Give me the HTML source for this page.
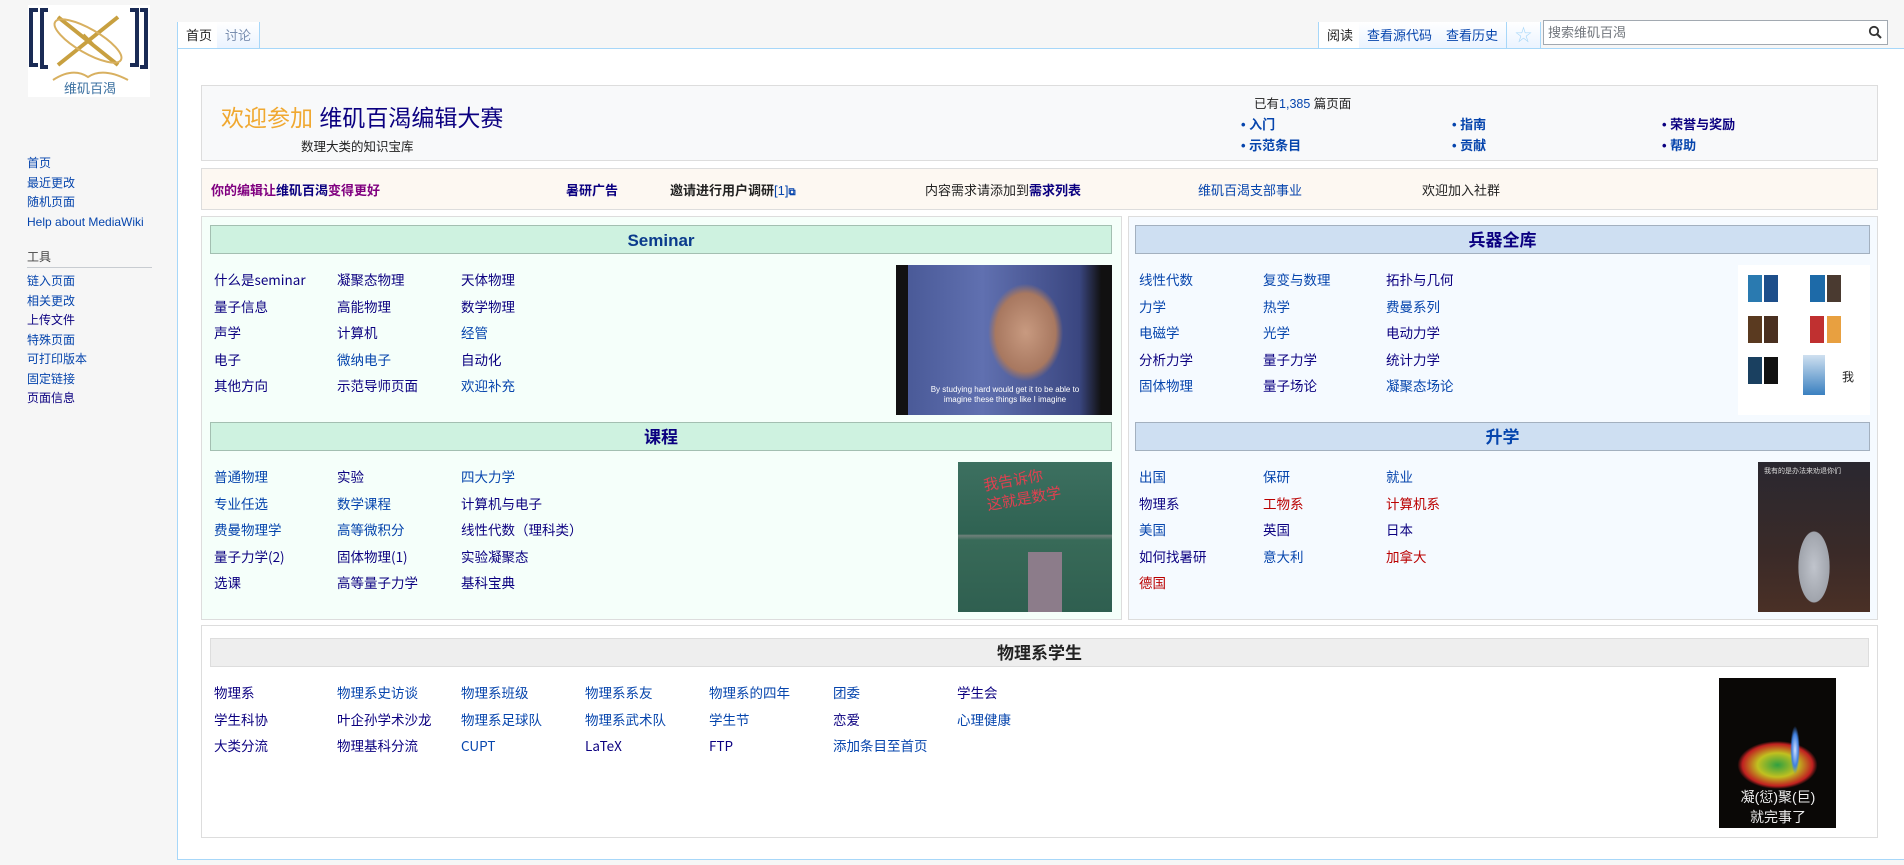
<!DOCTYPE html>
<html><head><meta charset="utf-8"><style>
*{margin:0;padding:0;box-sizing:border-box}
body{width:1904px;height:865px;overflow:hidden;background:#f6f6f6;font-family:"Liberation Sans","Noto Sans CJK SC",sans-serif;font-size:13px;color:#222;position:relative}
.a{position:absolute;white-space:nowrap}
.nv{color:#0b0080}.bl{color:#0645ad}.rd{color:#ba0000}.bk{color:#222}
#content{position:absolute;left:177px;top:48px;width:1727px;height:812px;background:#fff;border:1px solid #a7d7f9;border-right:none}
.side a{display:block;color:#0645ad;font-size:12px;line-height:19.5px;text-decoration:none}
.tab{position:absolute;top:22px;height:27px;font-size:13px;line-height:27px;padding:0 8px;background:linear-gradient(#fff,#eaf3ff);border-right:1px solid #a7d7f9}
.hdr{position:absolute;height:29px;text-align:center;font-weight:bold;font-size:17px;line-height:29px}
.row{position:absolute;font-size:13.5px}
.row span{position:absolute;white-space:nowrap;line-height:18px;height:18px;font-family:"Noto Sans CJK SC","Liberation Sans",sans-serif}
</style></head><body>
<div class="a" style="left:28px;top:5px;width:122px;height:92px;background:#fff"></div>
<svg class="a" style="left:28px;top:5px" width="122" height="92" viewBox="0 0 122 92">
<path d="M10 5H3V60H10" stroke="#1a2b55" stroke-width="4" fill="none"/>
<path d="M20 5H14V62H20" stroke="#1a2b55" stroke-width="4" fill="none"/>
<path d="M102 5H109V60H102M112 5H118V62H112" stroke="#1a2b55" stroke-width="4" fill="none"/>
<path d="M30 12L90 60M90 12L30 60M55 30l10 10" stroke="#c8a040" stroke-width="4" fill="none"/>
<ellipse cx="60" cy="36" rx="38" ry="12" transform="rotate(30 60 36)" stroke="#d8b060" stroke-width="2" fill="none"/>
<path d="M25 75Q45 62 60 72Q75 62 100 75" stroke="#d8b060" stroke-width="2" fill="none"/>
<text x="62" y="88" text-anchor="middle" font-size="13" fill="#3a6fa0" font-family="Noto Sans CJK SC">维矶百渴</text>
</svg>
<div class="side a" style="left:27px;top:154px">
<a>首页</a><a>最近更改</a><a>随机页面</a><a>Help about MediaWiki</a>
</div>
<div class="a" style="left:27px;top:248px;font-size:12px;color:#444">工具</div>
<div class="a" style="left:27px;top:267px;width:125px;height:1px;background:#c8ccd1"></div>
<div class="side a" style="left:27px;top:272px">
<a>链入页面</a><a>相关更改</a><a style="color:#0b0080">上传文件</a><a>特殊页面</a><a>可打印版本</a><a>固定链接</a><a style="color:#0b0080">页面信息</a>
</div>
<div class="tab" style="left:177px;background:#fff;color:#222;border-left:1px solid #a7d7f9">首页</div>
<div class="tab" style="left:217px;color:#7a8fb0">讨论</div>
<div class="a" style="left:260px;top:48px;width:1058px;height:1px;background:#a7d7f9"></div>
<div class="tab" style="left:1318px;background:#fff;color:#222;border-left:1px solid #a7d7f9">阅读</div>
<div class="tab" style="left:1359px;color:#0645ad">查看源代码</div>
<div class="tab" style="left:1438px;color:#0645ad">查看历史</div>
<div class="tab" style="left:1507px;color:#a7d7f9;font-size:17px">☆</div>
<div class="a" style="left:1543px;top:20px;width:345px;height:25px;border:1px solid #a2a9b1;background:#fff;font-size:13px;line-height:23px;padding-left:4px;color:#72777d">搜索维矶百渴</div>
<svg class="a" style="left:1868px;top:25px" width="14" height="14"><circle cx="6" cy="6" r="4.2" stroke="#333" stroke-width="1.8" fill="none"/><path d="M9 9L13 13" stroke="#333" stroke-width="2"/></svg>
<div id="content"></div>
<div class="a" style="left:201px;top:85px;width:1677px;height:76px;background:#f8f9fa;border:1px solid #ddd"></div>
<div class="a" style="left:221px;top:99px;font-size:23px"><span style="color:#f0a830">欢迎参加</span> <span style="color:#0b0080">维矶百渴编辑大赛</span></div>
<div class="a" style="left:301px;top:136px;font-size:12.5px">数理大类的知识宝库</div>
<div class="a" style="left:1254px;top:93px;font-size:12.5px">已有<span class="bl">1,385</span> 篇页面</div>
<div class="a" style="left:1241px;top:114px;font-size:13px;font-weight:bold;color:#0645ad;line-height:21px">• 入门<br>• 示范条目</div>
<div class="a" style="left:1452px;top:114px;font-size:13px;font-weight:bold;color:#0645ad;line-height:21px">• 指南<br>• 贡献</div>
<div class="a" style="left:1662px;top:114px;font-size:13px;font-weight:bold;color:#0b0080;line-height:21px">• 荣誉与奖励<br>• <span class="bl">帮助</span></div>
<div class="a" style="left:201px;top:168px;width:1677px;height:42px;background:#fdf8f2;border:1px solid #ddd"></div>
<div class="a" style="left:211px;top:180px;font-weight:bold;font-size:13px;color:#800080">你的编辑让<span class="nv">维矶百渴</span>变得更好</div>
<div class="a" style="left:566px;top:180px;font-weight:bold;color:#0b0080">暑研广告</div>
<div class="a" style="left:670px;top:180px;font-weight:bold;color:#222">邀请进行用户调研<span class="bl" style="font-weight:normal">[1]</span><span class="bl" style="font-size:10px">⧉</span></div>
<div class="a" style="left:925px;top:180px">内容需求请添加到<b class="nv">需求列表</b></div>
<div class="a bl" style="left:1198px;top:180px">维矶百渴支部事业</div>
<div class="a" style="left:1422px;top:180px">欢迎加入社群</div>
<div class="a" style="left:201px;top:216px;width:921px;height:404px;background:#f5fffa;border:1px solid #ddd"></div>
<div class="hdr" style="left:210px;top:225px;width:902px;background:#cef2e0;border:1px solid #a3bfb1;color:#0b3b8c">Seminar</div>
<div class="row" style="left:214px;top:270px">
<span class="nv" style="left:0;top:0">什么是seminar</span><span class="nv" style="left:123px;top:0">凝聚态物理</span><span class="nv" style="left:247px;top:0">天体物理</span>
<span class="nv" style="left:0;top:26.5px">量子信息</span><span class="nv" style="left:123px;top:26.5px">高能物理</span><span class="nv" style="left:247px;top:26.5px">数学物理</span>
<span class="nv" style="left:0;top:53px">声学</span><span class="nv" style="left:123px;top:53px">计算机</span><span class="bl" style="left:247px;top:53px">经管</span>
<span class="nv" style="left:0;top:79.5px">电子</span><span class="bl" style="left:123px;top:79.5px">微纳电子</span><span class="nv" style="left:247px;top:79.5px">自动化</span>
<span class="nv" style="left:0;top:106px">其他方向</span><span class="nv" style="left:123px;top:106px">示范导师页面</span><span class="bl" style="left:247px;top:106px">欢迎补充</span>
</div>
<div class="a" style="left:896px;top:265px;width:216px;height:150px;background:radial-gradient(ellipse 50px 65px at 60% 45%,#c89a80 0%,#a87860 60%,transparent 75%),linear-gradient(90deg,#111 0,#111 12px,#4a5a98 12px,#6070b0 40%,#3a4680 85%,#111 95%)"></div>
<div class="a" style="left:930px;top:385px;width:150px;font-size:8px;color:#fff;text-align:center;line-height:10px;white-space:normal">By studying hard would get it to be able to imagine these things like I imagine</div>
<div class="hdr" style="left:210px;top:422px;width:902px;background:#cef2e0;border:1px solid #a3bfb1;color:#0b0080">课程</div>
<div class="row" style="left:214px;top:467px">
<span class="bl" style="left:0;top:0">普通物理</span><span class="nv" style="left:123px;top:0">实验</span><span class="bl" style="left:247px;top:0">四大力学</span>
<span class="bl" style="left:0;top:26.5px">专业任选</span><span class="bl" style="left:123px;top:26.5px">数学课程</span><span class="nv" style="left:247px;top:26.5px">计算机与电子</span>
<span class="bl" style="left:0;top:53px">费曼物理学</span><span class="bl" style="left:123px;top:53px">高等微积分</span><span class="nv" style="left:247px;top:53px">线性代数（理科类）</span>
<span class="nv" style="left:0;top:79.5px">量子力学(2)</span><span class="nv" style="left:123px;top:79.5px">固体物理(1)</span><span class="nv" style="left:247px;top:79.5px">实验凝聚态</span>
<span class="nv" style="left:0;top:106px">选课</span><span class="nv" style="left:123px;top:106px">高等量子力学</span><span class="nv" style="left:247px;top:106px">基科宝典</span>
</div>
<div class="a" style="left:958px;top:462px;width:154px;height:150px;background:linear-gradient(180deg,#3d7060 0,#2f6252 48%,#70807a 49%,#386a58 52%,#2f5f50 100%)"></div>
<div class="a" style="left:985px;top:470px;font-size:15px;color:#e04050;line-height:20px;transform:rotate(-10deg)">我告诉你<br>这就是数学</div>
<div class="a" style="left:1028px;top:552px;width:34px;height:60px;background:#8c7c8a"></div>
<div class="a" style="left:1128px;top:216px;width:750px;height:404px;background:#f5faff;border:1px solid #ddd"></div>
<div class="hdr" style="left:1135px;top:225px;width:735px;background:#cedff2;border:1px solid #a3b0bf;color:#0b0080">兵器全库</div>
<div class="row" style="left:1139px;top:270px">
<span class="bl" style="left:0;top:0">线性代数</span><span class="bl" style="left:124px;top:0">复变与数理</span><span class="nv" style="left:247px;top:0">拓扑与几何</span>
<span class="bl" style="left:0;top:26.5px">力学</span><span class="bl" style="left:124px;top:26.5px">热学</span><span class="bl" style="left:247px;top:26.5px">费曼系列</span>
<span class="bl" style="left:0;top:53px">电磁学</span><span class="bl" style="left:124px;top:53px">光学</span><span class="nv" style="left:247px;top:53px">电动力学</span>
<span class="nv" style="left:0;top:79.5px">分析力学</span><span class="nv" style="left:124px;top:79.5px">量子力学</span><span class="nv" style="left:247px;top:79.5px">统计力学</span>
<span class="bl" style="left:0;top:106px">固体物理</span><span class="nv" style="left:124px;top:106px">量子场论</span><span class="bl" style="left:247px;top:106px">凝聚态场论</span>
</div>
<div class="a" style="left:1738px;top:265px;width:132px;height:150px;background:#fff"></div>
<div class="a" style="left:1748px;top:275px;width:14px;height:27px;background:#2a7ab0"></div><div class="a" style="left:1764px;top:275px;width:14px;height:27px;background:#1d4e8a"></div>
<div class="a" style="left:1810px;top:275px;width:15px;height:27px;background:#1d6aa8"></div><div class="a" style="left:1827px;top:275px;width:14px;height:27px;background:#4a3a30"></div>
<div class="a" style="left:1748px;top:316px;width:14px;height:27px;background:#5a3a20"></div><div class="a" style="left:1764px;top:316px;width:14px;height:27px;background:#4a3020"></div>
<div class="a" style="left:1810px;top:316px;width:14px;height:27px;background:#c03030"></div><div class="a" style="left:1827px;top:316px;width:14px;height:27px;background:#e8a040"></div>
<div class="a" style="left:1748px;top:357px;width:14px;height:27px;background:#1a4060"></div><div class="a" style="left:1764px;top:357px;width:14px;height:27px;background:#111"></div>
<div class="a" style="left:1803px;top:355px;width:22px;height:40px;background:linear-gradient(#cfe0f0,#3a80c0)"></div>
<div class="a" style="left:1842px;top:368px;font-size:12px">我</div>
<div class="hdr" style="left:1135px;top:422px;width:735px;background:#cedff2;border:1px solid #a3b0bf;color:#0645ad">升学</div>
<div class="row" style="left:1139px;top:467px">
<span class="bl" style="left:0;top:0">出国</span><span class="bl" style="left:124px;top:0">保研</span><span class="bl" style="left:247px;top:0">就业</span>
<span class="nv" style="left:0;top:26.5px">物理系</span><span class="rd" style="left:124px;top:26.5px">工物系</span><span class="rd" style="left:247px;top:26.5px">计算机系</span>
<span class="bl" style="left:0;top:53px">美国</span><span class="nv" style="left:124px;top:53px">英国</span><span class="nv" style="left:247px;top:53px">日本</span>
<span class="nv" style="left:0;top:79.5px">如何找暑研</span><span class="bl" style="left:124px;top:79.5px">意大利</span><span class="rd" style="left:247px;top:79.5px">加拿大</span>
<span class="rd" style="left:0;top:106px">德国</span>
</div>
<div class="a" style="left:1758px;top:462px;width:112px;height:150px;background:radial-gradient(ellipse 22px 50px at 50% 70%,#c0c4cc 0,#a0a4ac 70%,transparent 72%),linear-gradient(#2a2830,#3a2a28 60%,#4a3026)"></div>
<div class="a" style="left:1764px;top:466px;font-size:7px;color:#ddd">我有的是办法来劝退你们</div>
<div class="a" style="left:201px;top:625px;width:1677px;height:213px;background:#fff;border:1px solid #ddd"></div>
<div class="hdr" style="left:210px;top:638px;width:1659px;background:#eee;border:1px solid #ddd;color:#222">物理系学生</div>
<div class="row" style="left:214px;top:683px">
<span class="nv" style="left:0;top:0">物理系</span><span class="bl" style="left:123px;top:0">物理系史访谈</span><span class="bl" style="left:247px;top:0">物理系班级</span><span class="bl" style="left:371px;top:0">物理系系友</span><span class="bl" style="left:495px;top:0">物理系的四年</span><span class="bl" style="left:619px;top:0">团委</span><span class="nv" style="left:743px;top:0">学生会</span>
<span class="nv" style="left:0;top:26.5px">学生科协</span><span class="nv" style="left:123px;top:26.5px">叶企孙学术沙龙</span><span class="bl" style="left:247px;top:26.5px">物理系足球队</span><span class="bl" style="left:371px;top:26.5px">物理系武术队</span><span class="bl" style="left:495px;top:26.5px">学生节</span><span class="nv" style="left:619px;top:26.5px">恋爱</span><span class="bl" style="left:743px;top:26.5px">心理健康</span>
<span class="nv" style="left:0;top:53px">大类分流</span><span class="nv" style="left:123px;top:53px">物理基科分流</span><span class="bl" style="left:247px;top:53px">CUPT</span><span class="nv" style="left:371px;top:53px">LaTeX</span><span class="nv" style="left:495px;top:53px">FTP</span><span class="bl" style="left:619px;top:53px">添加条目至首页</span>
</div>
<div class="a" style="left:1719px;top:678px;width:117px;height:150px;background:radial-gradient(ellipse 8px 40px at 65% 48%,#d0e0ff 0,#4080e0 40%,transparent 60%),radial-gradient(ellipse 50px 30px at 50% 58%,#30a040 0,#c0c020 40%,#c02020 70%,transparent 80%),#0a0806"></div>
<div class="a" style="left:1723px;top:787px;font-size:14px;color:#eee;line-height:20px;text-align:center;width:110px">凝(愆)聚(巨)<br>就完事了</div>
</body></html>
